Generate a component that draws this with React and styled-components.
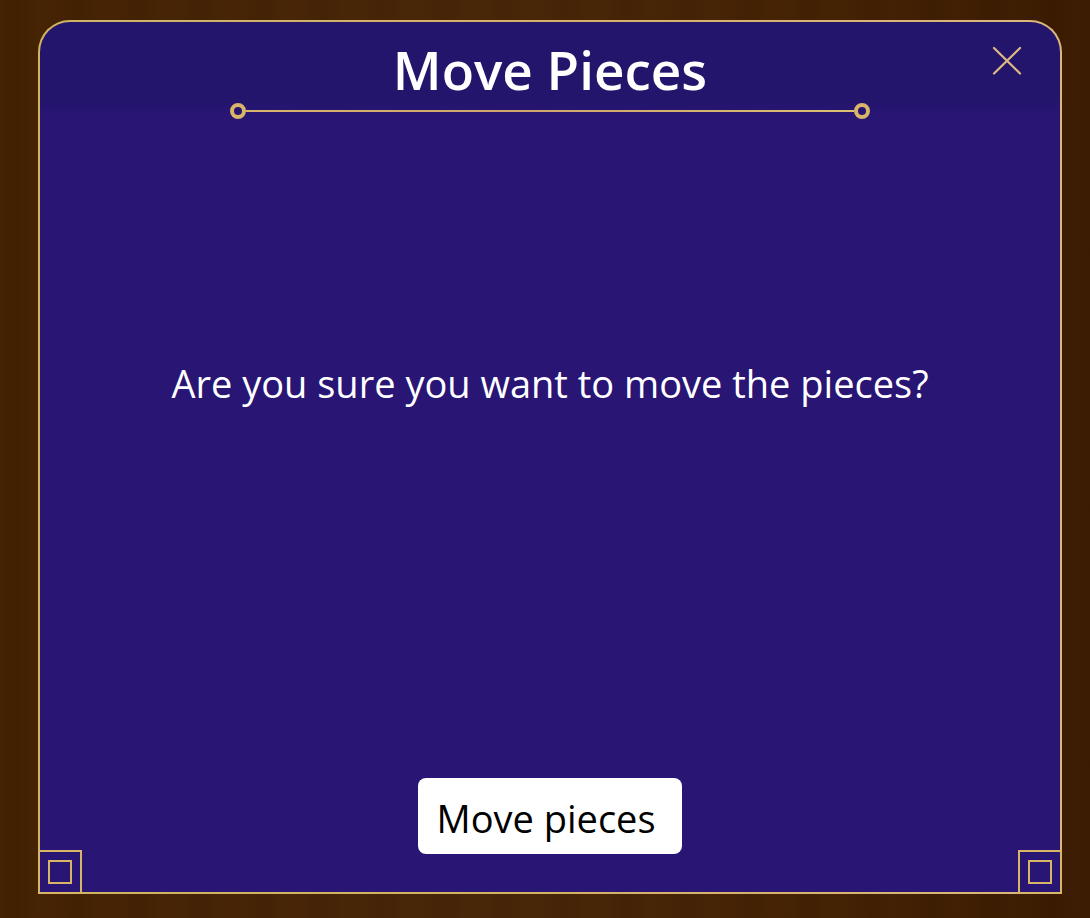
import React from "react";
import styled, { createGlobalStyle } from "styled-components";

const colors = {
  gold: "#d8b568",
  panel: "#281574",
  panelTop: "#24156c",
  white: "#ffffff",
  black: "#000000",
};

const App = () => (
  <Table>
    <GlobalStyle />
    <Dialog role="dialog" aria-labelledby="dialog-title">
      <Header>
        <Title id="dialog-title">Move Pieces</Title>
        <CloseButton type="button" aria-label="Close">
          <CloseIcon />
        </CloseButton>
      </Header>
      <Divider>
        <Ring />
        <Line />
        <Ring />
      </Divider>
      <Message>Are you sure you want to move the pieces?</Message>
      <Footer>
        <ConfirmButton type="button">Move pieces</ConfirmButton>
      </Footer>
      <Corner $side="left" />
      <Corner $side="right" />
    </Dialog>
  </Table>
);

const CloseIcon = () => (
  <svg width="30" height="30" viewBox="0 0 30 30" fill="none">
    <path
      d="M2 2L28 27.5M28 2L2 27.5"
      stroke="#dfba80"
      strokeWidth="2.2"
      strokeLinecap="round"
    />
  </svg>
);

export default App;

/** Styled components **/
const GlobalStyle = createGlobalStyle`
  *,
  *::before {
    box-sizing: border-box;
  }

  body {
    margin: 0;
    font-family: "Open Sans", "Noto Sans", sans-serif;
    color: ${colors.white};
  }
`;

const Table = styled.main`
  display: flex;
  min-height: 100vh;
  padding: 20px 28px 24px 38px;
  background:
    repeating-linear-gradient(
      90deg,
      rgba(30, 10, 0, 0) 0,
      rgba(30, 10, 0, 0.08) 17px,
      rgba(80, 50, 10, 0.08) 38px,
      rgba(30, 10, 0, 0) 61px
    ),
    linear-gradient(90deg, #442202 0%, #482608 45%, #442203 75%, #3b1b02 100%);
`;

const Dialog = styled.section`
  position: relative;
  display: flex;
  flex: 1;
  flex-direction: column;
  align-items: center;
  border: 2px solid transparent;
  border-radius: 32px 32px 0 0;
  background:
    linear-gradient(${colors.panelTop} 80px, ${colors.panel} 92px) padding-box,
    linear-gradient(90deg, #d0b464, #d5b166 50%, #dcb67c) border-box;
`;

const Header = styled.header`
  display: flex;
  justify-content: center;
  width: 100%;
  padding-top: 14px;
`;

const Title = styled.h1`
  margin: 0;
  font-size: 53px;
  font-weight: 600;
  line-height: 67px;
`;

const CloseButton = styled.button`
  position: absolute;
  top: 24px;
  right: 38px;
  display: flex;
  padding: 0;
  border: 0;
  background: none;
  cursor: pointer;
`;

const Divider = styled.div`
  display: flex;
  align-items: center;
  width: 100%;
  max-width: 640px;
`;

const Ring = styled.span`
  width: 16px;
  height: 16px;
  border: 4px solid ${colors.gold};
  border-radius: 50%;
`;

const Line = styled.span`
  flex: 1;
  height: 2px;
  background: linear-gradient(90deg, #d9b56c, #d0a56c 45%, #dcc070);
`;

const Message = styled.p`
  flex: 1;
  margin: 0;
  padding: 236px 24px 40px;
  font-size: 38px;
  line-height: 56px;
  text-align: center;
`;

const Footer = styled.footer`
  padding-bottom: 38px;
`;

const ConfirmButton = styled.button`
  padding: 12px 26px 8px 18px;
  border: 0;
  border-radius: 8px;
  background: ${colors.white};
  color: ${colors.black};
  font-family: inherit;
  font-size: 38px;
  line-height: 56px;
  cursor: pointer;
`;

const Corner = styled.span`
  position: absolute;
  bottom: -2px;
  ${({ $side }) => $side}: -2px;
  width: 44px;
  height: 44px;
  padding: 8px;
  border: 2px solid ${colors.gold};

  &::before {
    content: "";
    display: block;
    height: 24px;
    border: 2px solid ${colors.gold};
  }
`;
